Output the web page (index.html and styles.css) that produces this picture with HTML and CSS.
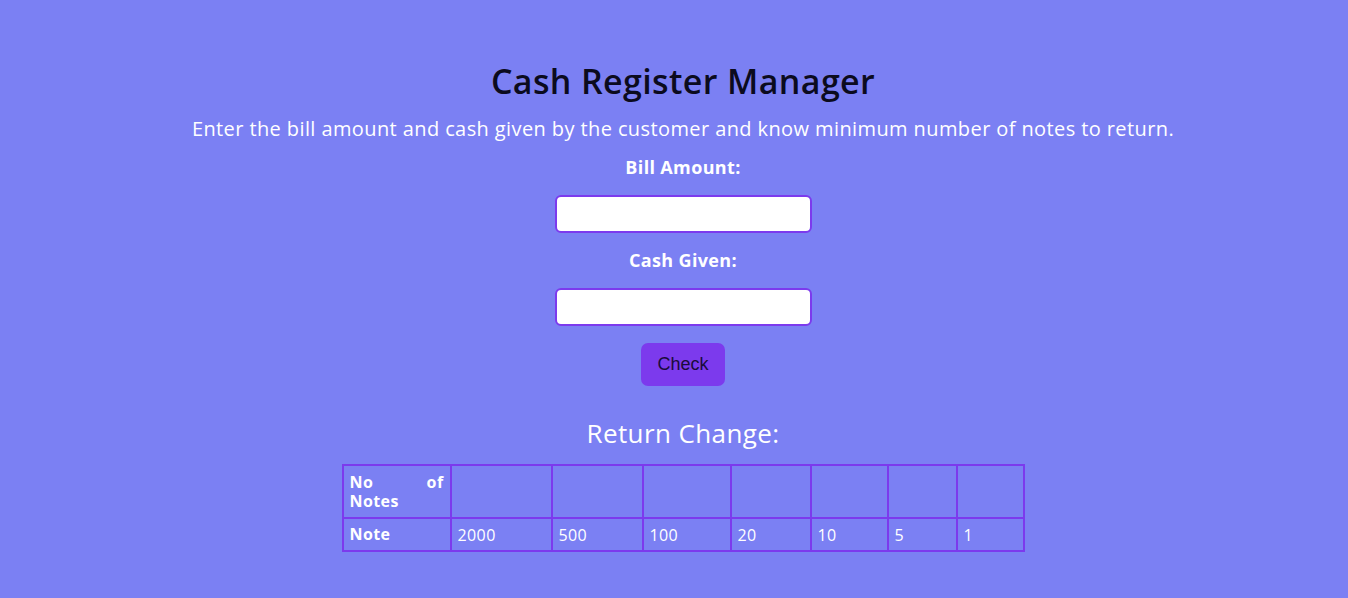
FILE: index.html
```html
<!DOCTYPE html>
<html lang="en">
<head>
<meta charset="utf-8">
<title>Cash Register Manager</title>
<link rel="stylesheet" href="styles.css">
</head>
<body>
<main class="app">
  <h1 class="title">Cash Register Manager</h1>
  <p class="subtitle">Enter the bill amount and cash given by the customer and know minimum number of notes to return.</p>
  <label class="label" for="bill">Bill Amount:</label>
  <input class="field" id="bill" type="number">
  <label class="label" for="cash">Cash Given:</label>
  <input class="field" id="cash" type="number">
  <button class="btn" type="button">Check</button>
  <h2 class="result-title">Return Change:</h2>
  <table class="change">
    <colgroup>
      <col class="w0"><col class="w1"><col class="w2"><col class="w3"><col class="w4"><col class="w5"><col class="w6"><col class="w7">
    </colgroup>
    <tr class="row-top">
      <th class="head">No of Notes</th>
      <td></td><td></td><td></td><td></td><td></td><td></td><td></td>
    </tr>
    <tr class="row-bottom">
      <th class="head">Note</th>
      <td>2000</td><td>500</td><td>100</td><td>20</td><td>10</td><td>5</td><td>1</td>
    </tr>
  </table>
</main>
</body>
</html>
```
FILE: styles.css
```css
html, body {
  margin: 0;
  padding: 0;
  background: #7b80f3;
}
body {
  font-family: "Open Sans", "DejaVu Sans", sans-serif;
  color: #ffffff;
}
.app {
  display: flex;
  flex-direction: column;
  align-items: center;
  padding: 61px 0 0 18px;
}
.title {
  margin: 0;
  font-size: 34px;
  font-weight: 600;
  line-height: 40px;
  color: #0b0b1e;
  letter-spacing: 0.37px;
}
.subtitle {
  margin: 16px 0 0;
  font-size: 20px;
  line-height: 24px;
  letter-spacing: 0.4px;
}
.label {
  margin-top: 15px;
  font-size: 18px;
  font-weight: 700;
  line-height: 22px;
  letter-spacing: 0.35px;
}
.label + .field { margin-top: 17px; }
.field + .label { margin-top: 16px; }
.field {
  width: 257px;
  height: 38px;
  box-sizing: border-box;
  border: 2px solid #7c3aed;
  border-radius: 6px;
  background: #fff;
  padding: 0 8px;
}
.btn {
  margin-top: 17px;
  width: 84px;
  height: 43px;
  border: none;
  border-radius: 7px;
  background: #7c3aed;
  color: #1a0b3b;
  font-family: "Liberation Sans", Arial, sans-serif;
  font-size: 18px;
}
.result-title {
  margin: 32px 0 0;
  font-size: 26px;
  font-weight: 500;
  line-height: 30px;
  letter-spacing: 0.4px;
}
.change {
  margin-top: 16px;
  width: 681px;
  table-layout: fixed;
  border-collapse: collapse;
  font-size: 16px;
  letter-spacing: 0.4px;
}
.w0 { width: 108px; }
.w1 { width: 101px; }
.w2 { width: 91px; }
.w3 { width: 88px; }
.w4 { width: 80px; }
.w5 { width: 77px; }
.w6 { width: 69px; }
.w7 { width: 67px; }
.change th, .change td {
  border: 2px solid #7c3aed;
  padding: 0 6px;
  text-align: left;
  vertical-align: middle;
}
.row-top { height: 53px; }
.row-bottom { height: 33px; }
.change .head {
  font-weight: 700;
  text-align: justify;
  line-height: 19px;
}
```
